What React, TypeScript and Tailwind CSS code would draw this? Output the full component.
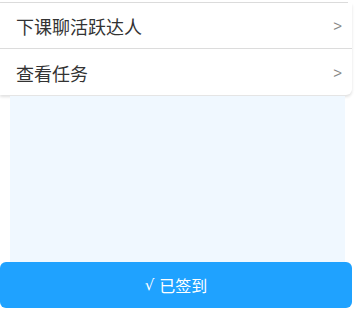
export default function App() {
  const rows = ["下课聊活跃达人", "查看任务"];
  return (
    <div
      className="w-[355px] h-[315px] bg-white overflow-hidden"
      style={{ fontFamily: '"Noto Sans CJK SC", "Liberation Sans", sans-serif' }}
    >
      <div className="h-[3px] w-[348px] border-b border-[#dcdcdc]" />
      <div className="w-[352px] bg-white rounded-br-md shadow-[0_2px_3px_rgba(0,0,0,0.12)]">
        {rows.map((r, i) => (
          <div
            key={i}
            className={
              "flex items-center justify-between h-[46px] pl-4 pr-[10px] pt-[2px] " +
              (i === 0 ? "border-b border-[#dcdcdc]" : "")
            }
          >
            <span className="text-[18px] text-[#333]">{r}</span>
            <span className="text-[15px] text-[#888] font-['Liberation_Sans',sans-serif]">&gt;</span>
          </div>
        ))}
      </div>
      <div className="mx-[10px] mt-[1px] h-[166px] bg-[#f0f8ff]" />
      <button className="w-[352px] h-[46px] rounded-md bg-[#1fa2ff] text-white text-[16px] flex items-center justify-center gap-[5px]">
        <span className="font-['DejaVu_Sans',sans-serif] text-[15px]">√</span>
        <span>已签到</span>
      </button>
    </div>
  );
}
